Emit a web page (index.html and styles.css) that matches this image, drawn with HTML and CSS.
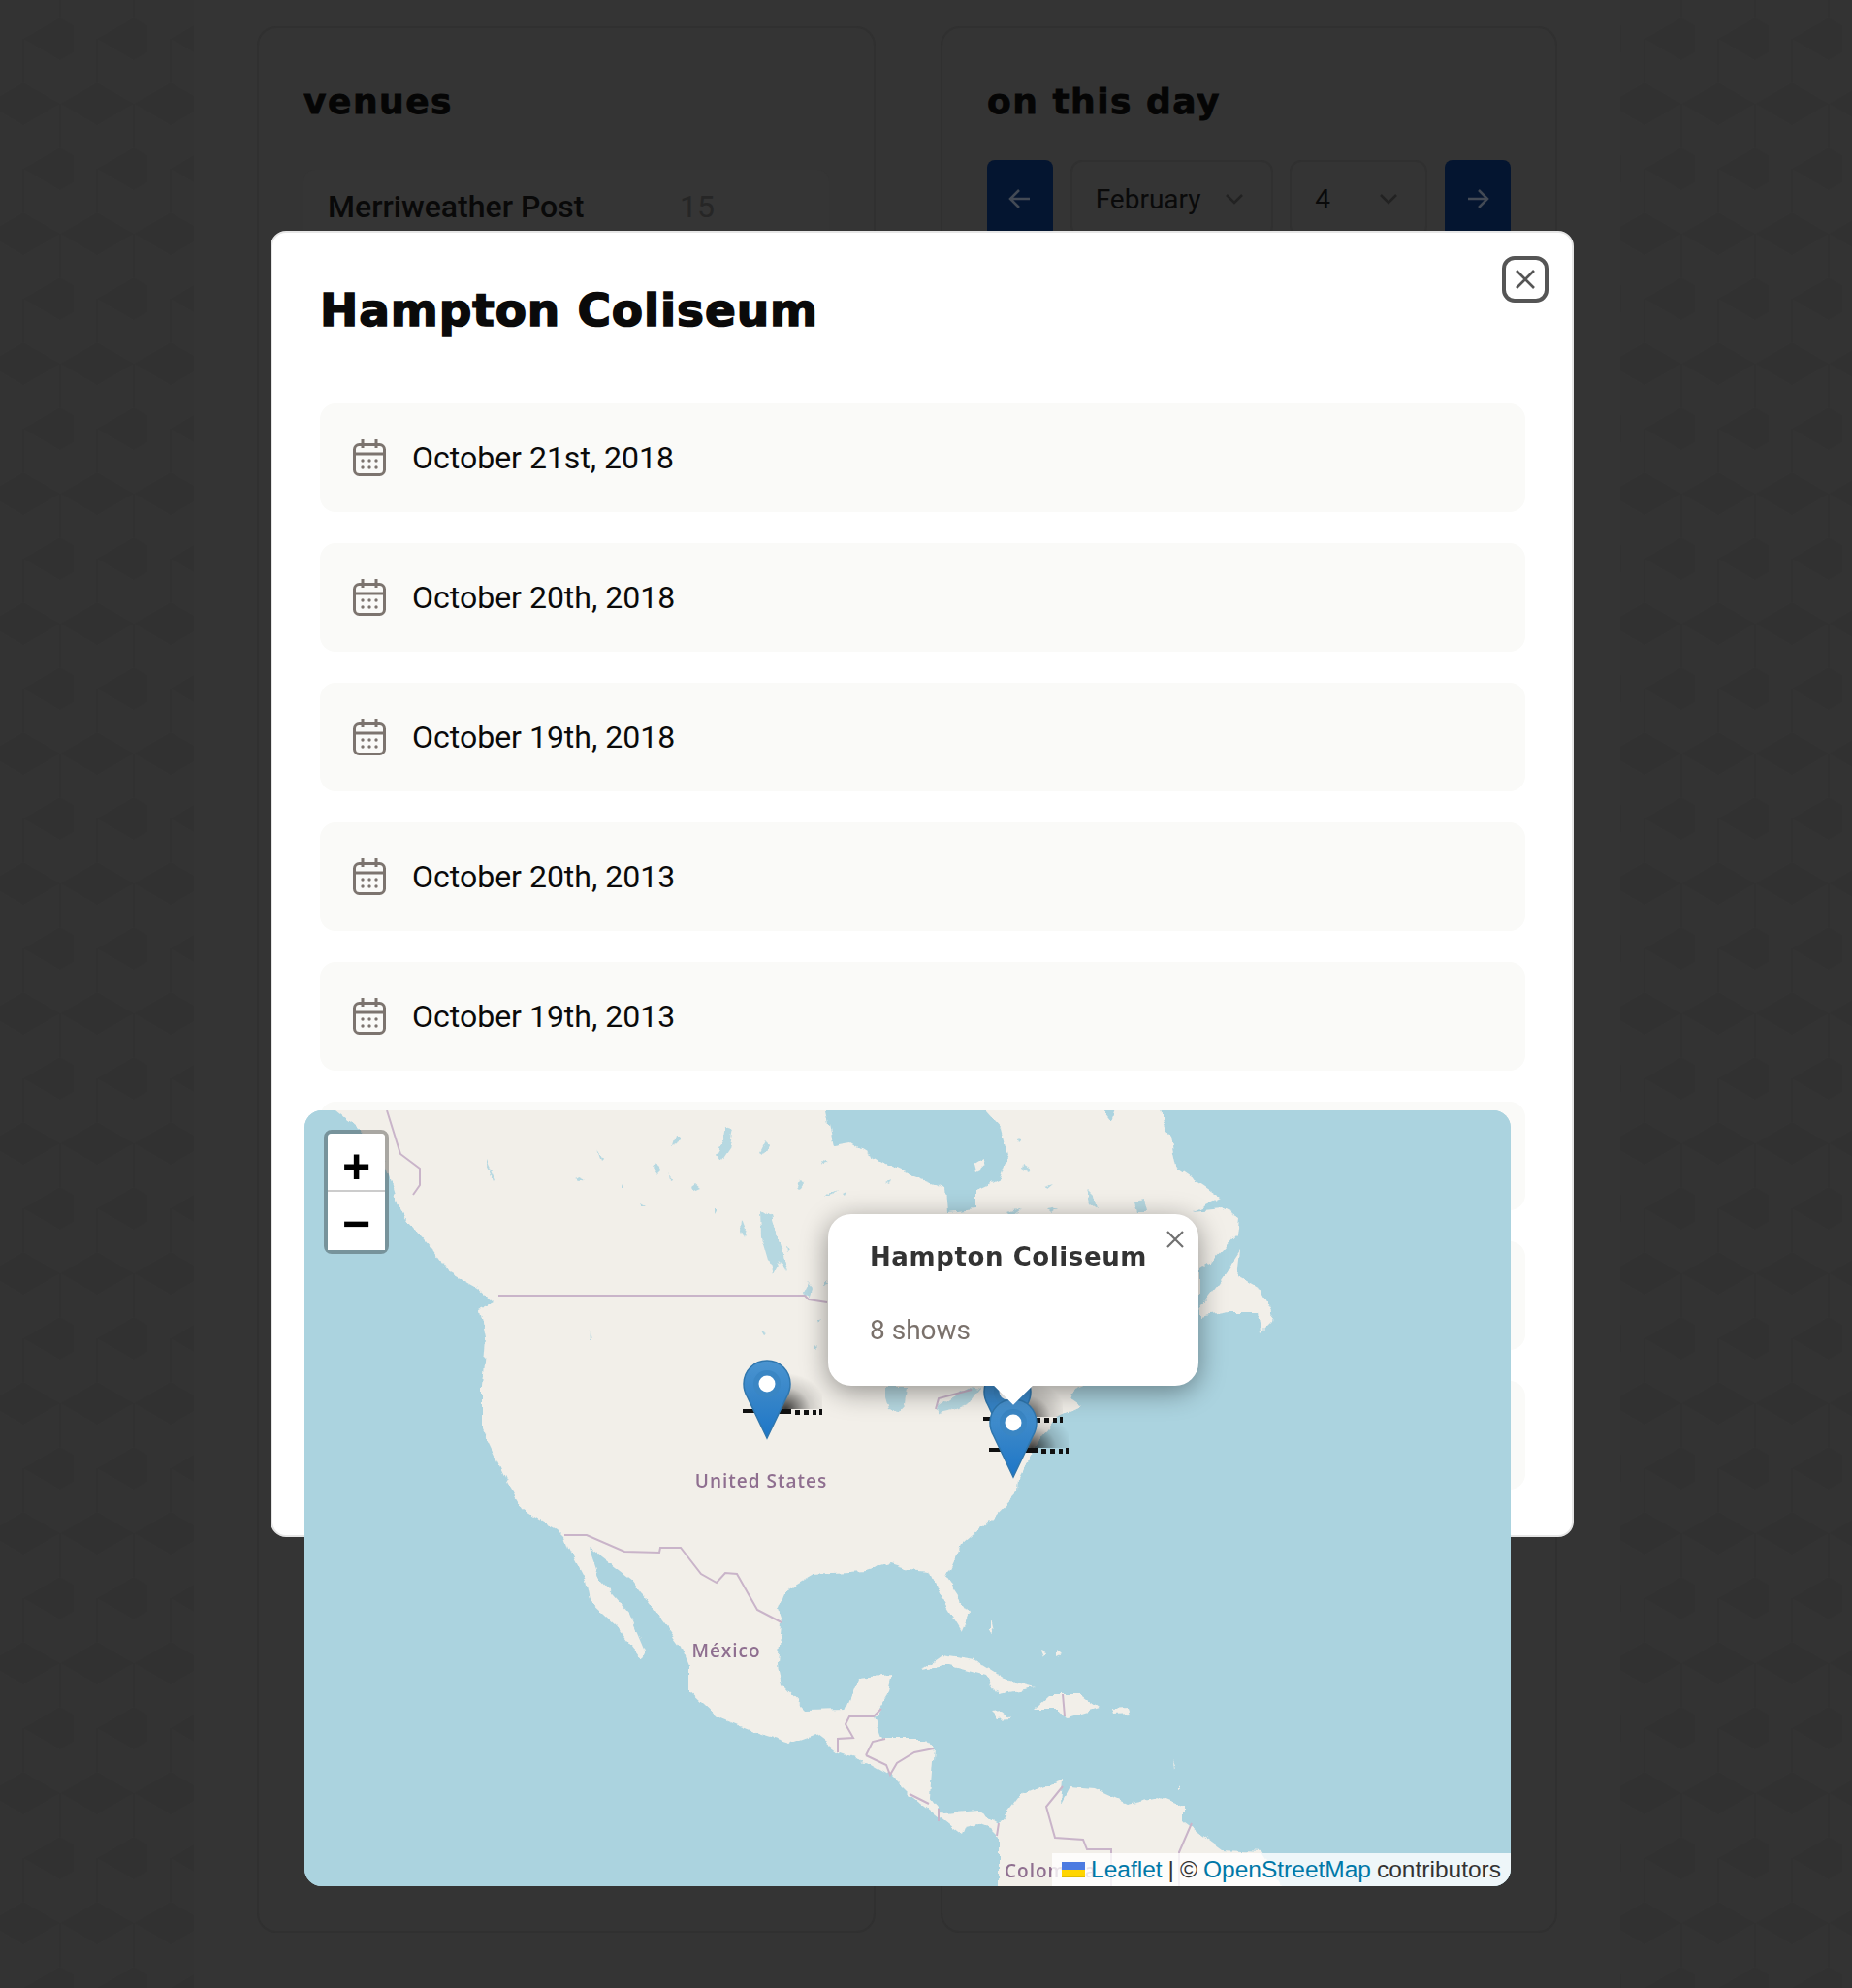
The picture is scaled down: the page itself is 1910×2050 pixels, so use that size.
FILE: index.html
```html
<!DOCTYPE html>
<html lang="en">
<head>
  <meta charset="UTF-8" />
  <title>Hampton Coliseum</title>
  <link rel="stylesheet" href="styles.css">
</head>
<body>

  <!-- cube wallpaper on both sides of the page -->
  <svg class="wallpaper" xmlns="http://www.w3.org/2000/svg">
    <defs>
      <pattern id="cubes" width="76" height="134" patternUnits="userSpaceOnUse">
        <path fill="#313131" d="M62 18L100 40 62 62 24 40zM24 85L62 107 24 129-14 107zM100 85L138 107 100 129 62 107z"/>
        <path stroke="#303030" stroke-width="1.5" fill="none" d="M24 40V85M62 107V134M62 0V18"/>
      </pattern>
    </defs>
    <rect width="100%" height="100%" fill="url(#cubes)"/>
  </svg>

  <main class="page">
    <section class="card">
      <h2 class="card-title">venues</h2>
      <div class="venue-row">
        <span class="venue-name">Merriweather Post</span>
        <span class="venue-count">15</span>
      </div>
    </section>

    <section class="card">
      <h2 class="card-title">on this day</h2>
      <div class="day-picker">
        <button class="day-arrow">
          <svg width="24" height="24" viewBox="0 0 24 24"><path d="M22 12H3M11 3l-9 9 9 9"/></svg>
        </button>
        <div class="day-select day-select-month">
          <span>February</span>
          <svg width="20" height="12" viewBox="0 0 20 12"><path d="M2 2l8 8 8-8"/></svg>
        </div>
        <div class="day-select day-select-date">
          <span>4</span>
          <svg width="20" height="12" viewBox="0 0 20 12"><path d="M2 2l8 8 8-8"/></svg>
        </div>
        <button class="day-arrow">
          <svg width="24" height="24" viewBox="0 0 24 24"><path d="M2 12h19M13 3l9 9-9 9"/></svg>
        </button>
      </div>
    </section>
  </main>

  <svg width="0" height="0" class="defs">
    <defs>
      <symbol id="calendar" viewBox="0 0 34 38">
        <rect x="1.5" y="5.5" width="31" height="31" rx="5" fill="none" stroke="currentColor" stroke-width="3"/>
        <path d="M1.5 15h31M10 0v9M24 0v9" fill="none" stroke="currentColor" stroke-width="3"/>
        <g fill="currentColor">
          <circle cx="10" cy="22" r="1.7"/><circle cx="17" cy="22" r="1.7"/><circle cx="24" cy="22" r="1.7"/>
          <circle cx="10" cy="29" r="1.7"/><circle cx="17" cy="29" r="1.7"/><circle cx="24" cy="29" r="1.7"/>
        </g>
      </symbol>
    </defs>
  </svg>

  <div class="overlay">
    <div class="modal">
      <button class="modal-close">
        <svg width="22" height="22" viewBox="0 0 22 22"><path d="M2 2l18 18M20 2L2 20"/></svg>
      </button>
      <h1 class="modal-title">Hampton Coliseum</h1>
      <ul class="show-list">
        <li class="show-row"><svg class="show-icon"><use href="#calendar"/></svg>October 21st, 2018</li>
        <li class="show-row"><svg class="show-icon"><use href="#calendar"/></svg>October 20th, 2018</li>
        <li class="show-row"><svg class="show-icon"><use href="#calendar"/></svg>October 19th, 2018</li>
        <li class="show-row"><svg class="show-icon"><use href="#calendar"/></svg>October 20th, 2013</li>
        <li class="show-row"><svg class="show-icon"><use href="#calendar"/></svg>October 19th, 2013</li>
        <!-- these three are behind the map -->
        <li class="show-row"></li>
        <li class="show-row"></li>
        <li class="show-row"></li>
      </ul>
    </div>

    <div class="map">
      <!-- viewBox uses page coordinates so the outline can be read off the screen -->
      <svg class="map-canvas" viewBox="314 1145 1244 800" xmlns="http://www.w3.org/2000/svg">
        <defs>
          <!-- roughens the hand traced coast so it reads like a tile -->
          <filter id="rough" x="-2%" y="-4%" width="104%" height="108%">
            <feTurbulence type="fractalNoise" baseFrequency="0.07" numOctaves="3" seed="4"/>
            <feDisplacementMap in="SourceGraphic" scale="9" xChannelSelector="R" yChannelSelector="G"/>
            <feGaussianBlur stdDeviation="0.6"/>
          </filter>
          <linearGradient id="pinFill" x1="0" y1="0" x2="0" y2="1">
            <stop offset="0" stop-color="#4a94d0"/>
            <stop offset="0.5" stop-color="#3584c8"/>
            <stop offset="1" stop-color="#1c76c8"/>
          </linearGradient>
          <radialGradient id="shadowFill" cx="0.1" cy="1" r="1">
            <stop offset="0" stop-color="#000" stop-opacity="0.75"/>
            <stop offset="0.6" stop-color="#000" stop-opacity="0.15"/>
            <stop offset="1" stop-color="#000" stop-opacity="0"/>
          </radialGradient>
          <g id="pinShadow">
            <rect x="40" y="14" width="42" height="37" fill="url(#shadowFill)"/>
            <path d="M0 51h32v4h-5v3h-14v-3h-13zM34 51h16v5h-16zM54 52h5v5h-5zM63 52h5v5h-5zM72 52h4v5h-4zM79 51h3v6h-3z" fill="#111"/>
          </g>
          <g id="pin">
            <path d="M25 1C11.5 1 1 11.5 1 25c0 5 1.4 9.6 3.8 13.6L25 81l20.2-42.4C47.6 34.6 49 30 49 25 49 11.5 38.5 1 25 1z" fill="url(#pinFill)" stroke="#2f76ad" stroke-width="1.5"/>
            <circle cx="25" cy="25" r="14" fill="#3a86c4"/>
            <circle cx="25" cy="25" r="8.5" fill="#fff"/>
          </g>
        </defs>

        <rect x="314" y="1145" width="1244" height="800" fill="#abd3df"/>

        <g filter="url(#rough)">
          <path d="M340 1120L850 1120 852 1145 860 1182 878 1179 913 1200 940 1212 975 1225 977 1250 1007 1247 1007 1228 1030 1217 1040 1190 1033 1163 1017 1145 1010 1120 1120 1120 1147 1155 1160 1120 1195 1120 1197 1145 1207 1173 1213 1203 1250 1228 1260 1235 1230 1249 1260 1246 1277 1255 1275 1273 1253 1297 1237 1307 1237 1350 1200 1380 1125 1425 1108 1432 1104 1443 1114 1450 1092 1460 1075 1480 1060 1505 1051 1523 1050 1537 1021 1567 992 1593 984 1610 976 1627 1000 1663 992 1682 972 1650 959 1620 938 1618 918 1612 893 1620 839 1623 810 1640 802 1660 806 1673 802 1717 806 1737 831 1763 872 1762 885 1730 922 1727 918 1743 901 1770 909 1793 955 1793 963 1803 959 1853 972 1870 1009 1867 1030 1880 1050 1853 1096 1835 1094 1860 1103 1843 1129 1845 1162 1860 1195 1853 1220 1863 1220 1877 1262 1908 1300 1910 1340 1970 1030 1970 1030 1893 1022 1885 1009 1880 996 1883 992 1893 963 1870 938 1850 918 1830 897 1818 864 1807 839 1788 814 1797 781 1787 739 1770 710 1743 710 1717 702 1697 677 1663 652 1630 607 1595 619 1630 648 1663 665 1703 661 1710 636 1677 607 1650 603 1630 586 1597 582 1585 574 1577 540 1557 524 1530 497 1473 497 1430 501 1380 495 1350 509 1343 491 1327 461 1310 445 1287 422 1260 411 1243 403 1217 396 1197 373 1167 346 1145Z" fill="#f2efe9"/>
          <!-- islands -->
          <path d="M1280 1290L1260 1320 1237 1350 1237 1358 1267 1353 1297 1353 1300 1373 1310 1363 1312 1353 1300 1330 1277 1317Z" fill="#f2efe9"/>
          <path d="M951 1722L972 1707 1005 1712 1038 1733 1067 1740 1030 1747 1017 1727 980 1717Z" fill="#f2efe9"/>
          <path d="M1067 1763L1084 1747 1113 1747 1133 1762 1100 1772 1092 1763Z" fill="#f2efe9"/>
          <path d="M1021 1765L1034 1764 1043 1771 1028 1772Z" fill="#f2efe9"/>
          <path d="M1147 1763L1163 1762 1165 1768 1149 1769Z" fill="#f2efe9"/>
          <path d="M1020 1668l4 18-4-3zM1003 1200l10-6 4 8-12 6zM1074 1700l5 2-2 5zM1092 1702l4 4-4 2zM1208 1815l3 8-2 2zM1216 1840l2 5-2 1z" fill="#f2efe9"/>

          <!-- lakes and inland water -->
          <g fill="#abd3df" fill-opacity="0.85">
            <path d="M784 1247L795 1254 806 1290 812 1312 803 1300 796 1313 785 1275Z"/>
            <path d="M750 1162l6 2-4 20-8 12-5-6 9-16zM697 1172l5 1-4 7-4 2zM790 1176l4 4-8 12-3-2zM598 1214l7 3-7 1-6-2zM716 1219l6 5-7 3-3-5zM676 1200l5 9-3 3-5-7z"/>
            <path d="M826 1218l5 1-4 6-4 2zM855 1232l10-5-6 6-7 2zM766 1257l4 10-2 9-3-7zM736 1244l3 3-3 5zM811 1285l3 5-2 2zM912 1220l6-3-2 5zM846 1198l8 2-6 2zM870 1232l4-2-2 4zM1047 1177l6-2-5 5zM1056 1200l8 5-2 3-7-4zM1076 1224l10-3-6 5zM1120 1226l8 8 3 12-6-4zM1170 1240l8-2 3 12-8 0zM1040 1250l13-5-10 8zM1080 1248l12-2-8 6z"/>
            <path d="M501 1195l10 22-1 2-9-20zM615 1185l6 10-2 2zM690 1210l3 7-2 1zM640 1220l2 4-2 2zM660 1240l5 3-4 0z"/>
            <path d="M913 1430h22l-2 18-8 9-8-2-4-14z"/>
            <path d="M966 1452l14-10 20-12 10 2-10 14-18 8-14 3z"/>
            <path d="M830 1332l4-8 5 6-2 6zM843 1360l4-2-3 5zM840 1385l3 3-3 3zM607 1372l2 10-1 0zM786 1372l6 3-3 2zM850 1320l3 4-3 1z"/>
          </g>
        </g>

        <g class="borders">
          <path d="M399 1145L413 1190 433 1205 433 1222 426 1232"/>
          <path d="M514 1336H830L834 1340 853 1343"/>
          <path d="M582 1583L605 1583 644 1600 680 1601 681 1596 702 1596 723 1623 739 1632 748 1622 760 1623 781 1660 806 1673"/>
          <path d="M909 1762L901 1770 876 1770 872 1778 880 1792 864 1793 864 1807"/>
          <path d="M893 1810L900 1796 913 1793M893 1810L914 1820 918 1830 925 1818 943 1807 963 1803"/>
          <path d="M938 1850L958 1860M968 1878V1865"/>
          <path d="M1030 1880L1028 1893M1096 1842L1079 1863 1088 1895 1117 1897 1121 1907 1146 1907 1146 1945"/>
          <path d="M1229 1880L1216 1910 1216 1945M1096 1747L1098 1770"/>
          <path d="M965 1453L968 1442 1002 1433"/>
        </g>

        <g class="map-labels">
          <text x="785" y="1534" text-anchor="middle">United States</text>
          <text x="749" y="1709" text-anchor="middle">México</text>
          <text x="1036" y="1936">Colombia</text>
        </g>

        <g class="pins">
          <use href="#pinShadow" x="1014" y="1410"/>
          <use href="#pin" x="1014" y="1410"/>
          <use href="#pinShadow" x="766" y="1402"/>
          <use href="#pin" x="766" y="1402"/>
          <use href="#pinShadow" x="1020" y="1442"/>
          <use href="#pin" x="1020" y="1442"/>
        </g>
      </svg>

      <div class="zoom-control">
        <button class="zoom-btn zoom-in">+</button>
        <button class="zoom-btn">&minus;</button>
      </div>

      <div class="popup">
        <span class="popup-close">
          <svg width="18" height="18" viewBox="0 0 18 18"><path d="M1 1l16 16M17 1L1 17"/></svg>
        </span>
        <h3 class="popup-title">Hampton Coliseum</h3>
        <p class="popup-text">8 shows</p>
        <div class="popup-tip"></div>
      </div>

      <div class="attribution">
        <svg class="flag" width="24" height="16" viewBox="0 0 12 8"><path fill="#4C7BE1" d="M0 0h12v4H0z"/><path fill="#FFD500" d="M0 4h12v3H0z"/><path fill="#E0BC00" d="M0 7h12v1H0z"/></svg>
        <a href="#">Leaflet</a> <span class="attr-sep">|</span> &copy; <a href="#">OpenStreetMap</a> contributors
      </div>
    </div>
  </div>

</body>
</html>
```

FILE: styles.css
```css
* {
  box-sizing: border-box;
}
html, body {
  margin: 0;
  height: 2050px;
  overflow: hidden;
}
body {
  position: relative;
  background: #333;
  font-family: Roboto, sans-serif;
}
.wallpaper {
  position: absolute;
  top: 0;
  left: 0;
  width: 1910px;
  height: 2050px;
}
.defs {
  position: absolute;
}

/* page under the modal */
.page {
  position: relative;
  width: 1471px;
  height: 2050px;
  margin-left: 200px;
  padding: 27px 65px 57px;
  background: #343434;
  display: grid;
  grid-template-columns: 638px 636px;
  gap: 67px;
}
.card {
  border: 2px solid #303030;
  border-radius: 20px;
  padding: 46px;
}
.card-title {
  margin: 0 0 30px;
  height: 60px;
  line-height: 60px;
  font-family: "DejaVu Sans", sans-serif;
  font-size: 36px;
  font-weight: 700;
  letter-spacing: 1.5px;
  color: #050505;
  -webkit-text-stroke: 0.8px #050505;
}
.venue-row {
  margin-top: 40px;
  height: 76px;
  padding-left: 25px;
  background: #353535;
  border-radius: 12px;
  display: flex;
  align-items: center;
  font-size: 32px;
}
.venue-name {
  width: 363px;
  font-weight: 500;
  color: #090909;
}
.venue-count {
  color: #262626;
}
.day-picker {
  display: flex;
  justify-content: space-between;
}
.day-arrow {
  width: 68px;
  height: 80px;
  border: none;
  border-radius: 8px;
  background: #041530;
  display: flex;
  align-items: center;
  justify-content: center;
}
.day-arrow path {
  fill: none;
  stroke: #434a55;
  stroke-width: 2.5;
}
.day-select {
  height: 80px;
  border: 2px solid #303030;
  border-radius: 12px;
  display: flex;
  align-items: center;
  justify-content: space-between;
  padding: 0 28px 0 24px;
  font-size: 28px;
  color: #0a0a0a;
}
.day-select path {
  fill: none;
  stroke: #222;
  stroke-width: 2.5;
}
.day-select-month {
  width: 209px;
}
.day-select-date {
  width: 142px;
}

/* modal */
.overlay {
  position: absolute;
  top: 0;
  left: 0;
  width: 1910px;
  height: 2050px;
}
.modal {
  position: absolute;
  top: 238px;
  left: 279px;
  width: 1344px;
  height: 1347px;
  padding: 48px 48px 48px 49px;
  background: #fff;
  border: 2px solid #e6e6e6;
  border-radius: 16px;
}
.modal-close {
  position: absolute;
  top: 24px;
  right: 24px;
  width: 48px;
  height: 48px;
  padding: 0;
  background: #fff;
  border: 4px solid #555;
  border-radius: 13px;
  display: flex;
  align-items: center;
  justify-content: center;
}
.modal-close path {
  fill: none;
  stroke: #555;
  stroke-width: 2.6;
}
.modal-title {
  margin: 0 0 64px;
  height: 64px;
  line-height: 64px;
  font-family: "DejaVu Sans", sans-serif;
  font-size: 47px;
  font-weight: 700;
  letter-spacing: 0.9px;
  color: #0a0a0a;
  -webkit-text-stroke: 1.6px #0a0a0a;
}
.show-list {
  list-style: none;
  margin: 0;
  padding: 0;
  display: flex;
  flex-direction: column;
  gap: 32px;
}
.show-row {
  height: 112px;
  padding-left: 34px;
  background: #fafaf8;
  border-radius: 16px;
  display: flex;
  align-items: center;
  gap: 27px;
  font-size: 32px;
  color: #0a0a0a;
}
.show-icon {
  width: 34px;
  height: 38px;
  color: #7c746f;
}

/* map */
.map {
  position: absolute;
  top: 1145px;
  left: 314px;
  width: 1244px;
  height: 800px;
  border-radius: 18px;
  overflow: hidden;
  background: #abd3df;
}
.map-canvas {
  display: block;
  width: 1244px;
  height: 800px;
}
.borders path {
  fill: none;
  stroke: #c9b4c9;
  stroke-width: 2;
  filter: blur(0.5px);
}
.map-labels text {
  font-family: "Open Sans", sans-serif;
  font-size: 19px;
  font-weight: 600;
  letter-spacing: 1px;
  fill: #8f6f90;
  stroke: #f2efe9;
  stroke-width: 2px;
  paint-order: stroke;
  filter: blur(0.4px);
}
.pins {
  filter: blur(0.5px);
}
.zoom-control {
  position: absolute;
  top: 20px;
  left: 20px;
  width: 67px;
  border: 4px solid rgba(0, 0, 0, 0.3);
  border-radius: 8px;
  background-clip: padding-box;
}
.zoom-btn {
  display: block;
  width: 59px;
  height: 60px;
  padding: 6px 0 0;
  border: none;
  background: #fff;
  color: #000;
  font-family: "Liberation Sans", sans-serif;
  font-size: 50px;
  font-weight: 700;
  line-height: 52px;
  text-align: center;
}
.zoom-in {
  padding-top: 8px;
  border-bottom: 2px solid #ccc;
  border-radius: 4px 4px 0 0;
}
.popup {
  position: absolute;
  top: 107px;
  left: 540px;
  width: 382px;
  height: 177px;
  padding: 26px 43px;
  background: #fff;
  border-radius: 24px;
  box-shadow: 0 6px 28px rgba(0, 0, 0, 0.4);
}
.popup-close {
  position: absolute;
  top: 17px;
  right: 15px;
  width: 18px;
  height: 18px;
}
.popup-close svg {
  display: block;
}
.popup-close path {
  fill: none;
  stroke: #707070;
  stroke-width: 2.2;
}
.popup-title {
  margin: 0 0 40px;
  line-height: 36px;
  white-space: nowrap;
  font-family: "DejaVu Sans", sans-serif;
  font-size: 26px;
  font-weight: 700;
  letter-spacing: 0.6px;
  color: #333;
}
.popup-text {
  position: relative;
  margin: 0;
  line-height: 36px;
  font-size: 28px;
  color: #7a716b;
}
.popup-tip {
  position: absolute;
  bottom: -14px;
  left: 177px;
  width: 28px;
  height: 28px;
  background: #fff;
  transform: rotate(45deg);
}
.attribution {
  position: absolute;
  right: 0;
  bottom: 0;
  height: 34px;
  padding: 0 10px;
  background: rgba(255, 255, 255, 0.8);
  display: flex;
  align-items: center;
  gap: 6px;
  white-space: nowrap;
  font-family: "Liberation Sans", sans-serif;
  font-size: 24.5px;
  color: #333;
}
.attribution a {
  color: #0078a8;
  text-decoration: none;
}
.flag {
  flex: none;
}
```
